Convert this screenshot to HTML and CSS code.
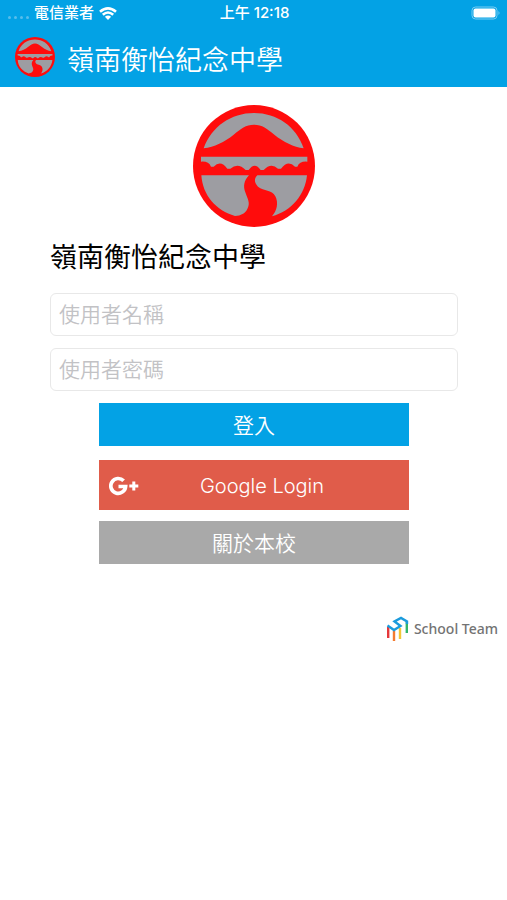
FILE: index.html
```
<!DOCTYPE html>
<html lang="zh-Hant">
<head>
    <meta charset="UTF-8">
    <meta name="viewport" content="width=device-width, initial-scale=1.0">
    <title>嶺南衡怡紀念中學</title>
    <link rel="stylesheet" href="styles.css">
</head>
<body>
    <!-- School crest, used in the header and above the form -->
    <svg class="symbols" aria-hidden="true">
        <symbol id="crest" viewBox="24 20 366 366">
            <circle cx="207" cy="203" r="183" fill="#ff0c0c"/>
            <path fill="#9d9da2" d="M56 150C80 84 138 44 207 44S334 84 356 150C326 146 296 131 268 109C246 91 232 79 207 79S168 91 146 109C118 131 88 146 56 150Z"/>
            <path fill="#9d9da2" d="M48 175H367V190Q344 188 337 205H330Q309 183 288 211H279Q258 191 236 215H227Q209 189 191 215H182Q159 191 136 211H127Q107 183 86 205H78Q71 188 48 190Z"/>
            <path fill="#9d9da2" d="M49 231H192C177 247 174 263 181 282C188 303 197 314 187 332C180 346 168 352 150 353C94 337 53 292 49 231Z"/>
            <path fill="#9d9da2" d="M217 231H366C360 291 319 338 261 354C276 338 281 313 271 294C260 272 237 280 219 265C207 253 207 241 217 231Z"/>
        </symbol>
    </svg>

    <header class="header">
        <div class="status-bar">
            <div class="carrier">
                <span class="signal"><i></i><i></i><i></i><i></i></span>
                <span>電信業者</span>
                <svg class="wifi" viewBox="0 0 18 13" aria-hidden="true">
                    <path d="M1 4.8Q9-2 17 4.8M3.8 7.8Q9 3.2 14.2 7.8" fill="none" stroke="#fff" stroke-width="2.6"/>
                    <path d="M5.9 9.7Q9 7.2 12.1 9.7L9 13Z" fill="#fff"/>
                </svg>
            </div>
            <time>上午 12:18</time>
            <svg class="battery" viewBox="0 0 30 14" aria-hidden="true">
                <rect x="1" y="1" width="25" height="12" rx="3.5" fill="none" stroke="#7bcdf3"/>
                <rect x="2.5" y="2.5" width="22" height="9" rx="2" fill="#fff"/>
                <path d="M27.5 5Q29.5 7 27.5 9Z" fill="#7bcdf3"/>
            </svg>
        </div>
        <div class="title-bar">
            <svg class="crest-small" aria-hidden="true"><use href="#crest"/></svg>
            <span>嶺南衡怡紀念中學</span>
        </div>
    </header>

    <main class="container">
        <svg class="crest" role="img" aria-label="嶺南衡怡紀念中學"><use href="#crest"/></svg>
        <h1>嶺南衡怡紀念中學</h1>
        <form class="login-form">
            <input type="text" id="username" placeholder="使用者名稱" aria-label="使用者名稱">
            <input type="password" id="password" placeholder="使用者密碼" aria-label="使用者密碼">
            <div class="buttons">
                <button type="submit" class="btn login">登入</button>
                <button type="button" class="btn google">
                    <svg class="google-icon" viewBox="0 0 30 20" aria-hidden="true">
                        <path d="M14.6 4.8A7.4 7.4 0 1 0 16.6 10.5H9.5" fill="none" stroke="#fff" stroke-width="3.7"/>
                        <path d="M24.8 5.5V14.5M20.3 10H29.3" stroke="#fff" stroke-width="3"/>
                    </svg>
                    <span>Google Login</span>
                </button>
                <button type="button" class="btn about">關於本校</button>
            </div>
        </form>
    </main>

    <footer class="footer">
        <svg class="team-icon" viewBox="0 0 24 26" aria-hidden="true">
            <g fill="none" stroke-width="2.4">
                <path d="M2.2 11V22" stroke="#e5383b"/>
                <path d="M8 15V25" stroke="#f47b30"/>
                <path d="M14 12V23" stroke="#f3c735"/>
                <path d="M20.8 6V17" stroke="#34b56a"/>
                <path d="M1.5 9.5L8 14L14.5 10L8.5 5.5L15 2L21 5.5V8" stroke="#1b9bdc"/>
            </g>
        </svg>
        <span>School Team</span>
    </footer>
</body>
</html>
```
FILE: styles.css
```
* {
    box-sizing: border-box;
}
body {
    margin: 0;
    background-color: #fff;
    color: #000;
    font-family: Inter, "Noto Sans CJK TC", sans-serif;
}
.symbols {
    display: none;
}
.header {
    background-color: #03a2e5;
    color: #fff;
}
.status-bar {
    display: grid;
    grid-template-columns: 1fr auto 1fr;
    align-items: center;
    height: 26px;
    padding: 0 6px 0 8px;
    font-size: 15px;
    font-weight: 500;
    line-height: 26px;
}
.carrier {
    display: flex;
    align-items: center;
    gap: 5px;
}
.signal {
    display: flex;
    gap: 3px;
    padding-top: 8px;
}
.signal i {
    width: 3px;
    height: 3px;
    border-radius: 50%;
    background-color: #58bdeb;
}
.wifi {
    width: 18px;
    height: 13px;
}
.battery {
    justify-self: end;
    width: 30px;
    height: 14px;
}
.title-bar {
    display: flex;
    align-items: center;
    gap: 12px;
    height: 61px;
    padding: 0 16px 0 15px;
    font-size: 27px;
    font-weight: 350;
    line-height: 40px;
}
.title-bar span {
    padding-top: 9px;
}
.crest-small {
    width: 40px;
    height: 40px;
}
.container {
    padding: 18px 49px 0 50px;
}
.crest {
    display: block;
    width: 122px;
    height: 122px;
    margin: 0 auto;
}
h1 {
    margin: 11px 0 15px;
    font-size: 27px;
    font-weight: 400;
    line-height: 40px;
}
.login-form {
    display: flex;
    flex-direction: column;
    gap: 12px;
}
input {
    width: 100%;
    height: 43px;
    padding: 0 8px;
    border: 1px solid #e8e8e8;
    border-radius: 6px;
    background-color: #fff;
    font-family: inherit;
    font-size: 21px;
    font-weight: 350;
}
input::placeholder {
    color: #c2c2c5;
    opacity: 1;
}
.buttons {
    display: flex;
    flex-direction: column;
    width: 76%;
    margin: 0 auto;
}
.btn {
    height: 43px;
    padding: 0 0 2px;
    border: none;
    color: #fff;
    font-family: inherit;
    font-size: 21px;
    font-weight: 350;
    cursor: pointer;
}
.login {
    background-color: #03a2e5;
}
.google {
    display: grid;
    grid-template-columns: 30px 1fr 14px;
    align-items: center;
    height: 50px;
    margin: 14px 0 11px;
    padding: 1px 10px 0;
    background-color: #e05c4a;
    font-size: 20px;
}
.google-icon {
    width: 30px;
    height: 20px;
}
.about {
    background-color: #a9a9a9;
}
.footer {
    display: flex;
    justify-content: flex-end;
    align-items: center;
    gap: 4px;
    padding: 52px 9px 0;
    color: #737373;
    font-family: "Noto Sans", sans-serif;
    font-size: 14px;
    font-weight: 500;
    line-height: 26px;
}
.team-icon {
    width: 24px;
    height: 26px;
}
```
